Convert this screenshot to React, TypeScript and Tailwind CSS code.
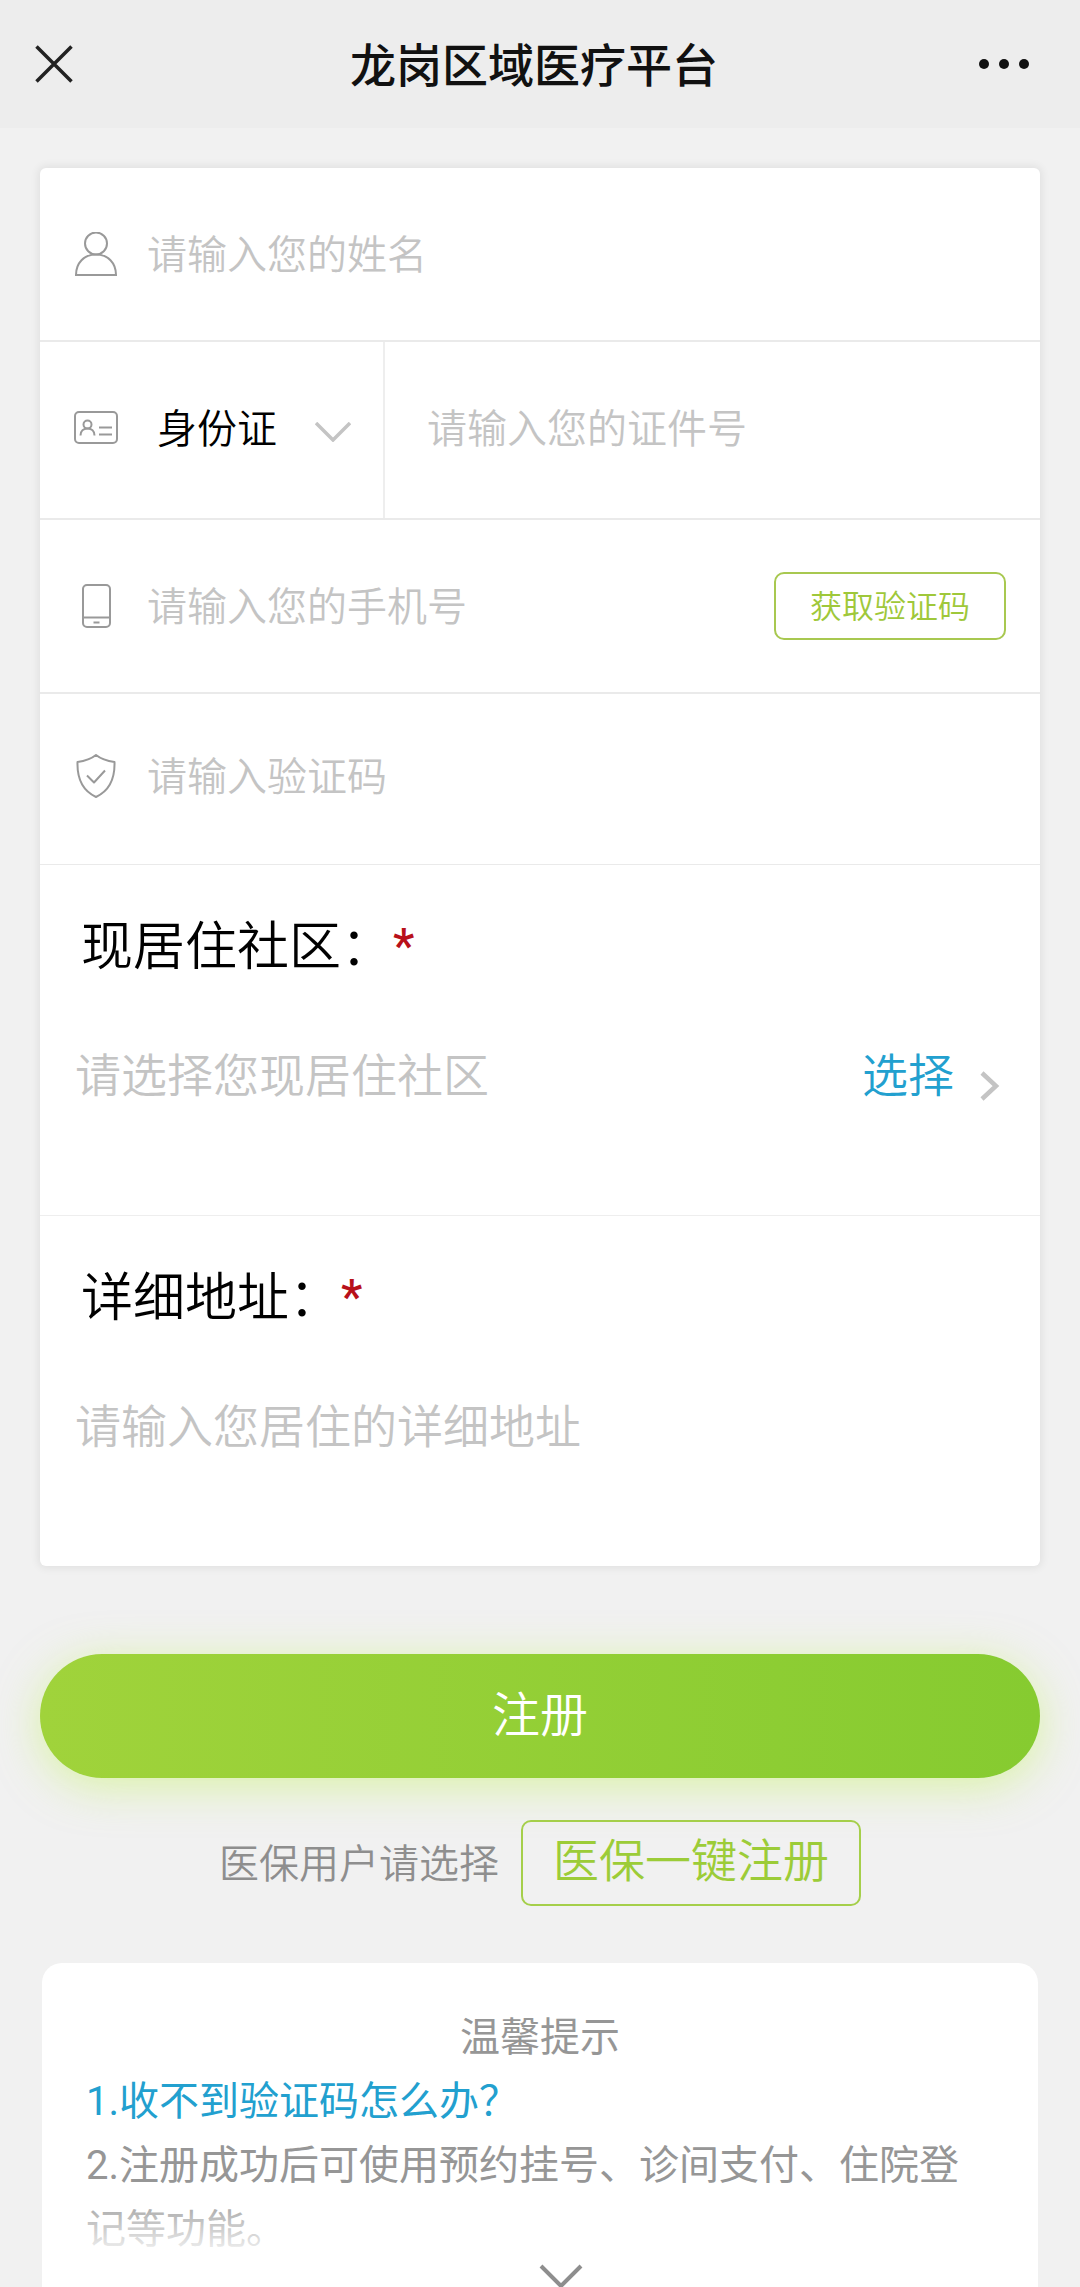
import { useState } from "react"
import type { ReactNode } from "react"

const inputClasses =
  "min-w-0 flex-1 bg-transparent pt-1 text-[40px] leading-[60px] font-[350] text-black outline-none placeholder:text-[#c4c4c4]"

function UserIcon() {
  return (
    <svg className="h-11 w-11" viewBox="0 0 44 44" fill="none" stroke="#999" strokeWidth="2" aria-hidden="true">
      <circle cx="22" cy="11.5" r="11" />
      <path d="M2 43C2 31 10 22.5 22 22.5S42 31 42 43Z" />
    </svg>
  )
}

function IdCardIcon() {
  return (
    <svg className="h-11 w-11" viewBox="0 0 44 44" fill="none" stroke="#999" strokeWidth="2" aria-hidden="true">
      <rect x="1" y="6" width="42" height="31" rx="4" />
      <circle cx="13.5" cy="18.5" r="4" />
      <path d="M6.5 29.5C6.5 25 9.5 22.5 13.5 22.5S20.5 25 20.5 29.5" />
      <path d="M25 21.5H38M25 28.5H38" />
    </svg>
  )
}

function PhoneIcon() {
  return (
    <svg className="h-11 w-11" viewBox="0 0 44 44" fill="none" stroke="#999" strokeWidth="2" aria-hidden="true">
      <rect x="9" y="1" width="27" height="42" rx="4" />
      <path d="M9 33.5H36M19.5 38.5H25.5" />
    </svg>
  )
}

function ShieldIcon() {
  return (
    <svg className="h-11 w-11" viewBox="0 0 44 44" fill="none" stroke="#999" strokeWidth="2" strokeLinejoin="round" aria-hidden="true">
      <path d="M22 1C27 5 33 7 40.5 8C41 24 35 37 22 43C9 37 3 24 3.5 8C11 7 17 5 22 1Z" />
      <path d="M13 21.5L20 28.5L31 16.5" />
    </svg>
  )
}

interface FieldRowProps {
  icon: ReactNode
  label: string
  type?: string
  className: string
  children?: ReactNode
}

function FieldRow({ icon, label, type = "text", className, children }: FieldRowProps) {
  return (
    <div className={`flex items-center border-[#eaeaea] px-[34px] ${className}`}>
      {icon}
      <input type={type} aria-label={label} placeholder={label} className={`ml-[29px] ${inputClasses}`} />
      {children}
    </div>
  )
}

interface AddressSectionProps {
  id: string
  title: string
  placeholder: string
  className?: string
  children?: ReactNode
}

function AddressSection({ id, title, placeholder, className = "", children }: AddressSectionProps) {
  return (
    <div className={`px-[35px] pt-[47px] pb-[109px] ${className}`}>
      <label htmlFor={id} className="flex h-[72px] pl-[6px] text-[52px] leading-[72px] font-[350] text-black">
        <span>{title}：</span>
        <span className="text-[48px] leading-[68px] font-medium text-[#b8101a]">*</span>
      </label>
      <div className="mt-[62px] flex items-center">
        <input
          id={id}
          type="text"
          placeholder={placeholder}
          className="min-w-0 flex-1 bg-transparent text-[46px] leading-[60px] font-[350] text-black outline-none placeholder:text-[#c4c4c4]"
        />
        {children}
      </div>
    </div>
  )
}

export default function App() {
  const [idType, setIdType] = useState("身份证")

  return (
    <div className="min-h-screen bg-[#f1f1f1] font-['Roboto','Noto_Sans_CJK_SC',sans-serif]" lang="zh-CN">
      {/* Title bar */}
      <header className="flex items-center justify-between bg-[#ededed] py-8 pr-[51px] pl-[35px]">
        <button type="button" aria-label="关闭" className="w-[54px]">
          <svg className="h-[38px] w-[38px]" viewBox="0 0 38 38" fill="none" stroke="#222" strokeWidth="3.5">
            <path d="M1.5 1.5L36.5 36.5M36.5 1.5L1.5 36.5" />
          </svg>
        </button>
        <h1 className="pt-1 text-[46px] leading-[60px] font-medium text-[#111]">龙岗区域医疗平台</h1>
        <button type="button" aria-label="更多">
          <svg className="h-[10px] w-[50px]" viewBox="0 0 50 10" fill="#111">
            <circle cx="5" cy="5" r="5" />
            <circle cx="25" cy="5" r="5" />
            <circle cx="45" cy="5" r="5" />
          </svg>
        </button>
      </header>

      <main>
        <form className="px-10 pt-10" onSubmit={(e) => e.preventDefault()}>
          {/* Form card */}
          <div className="rounded-md bg-white shadow-[0_0_8px_2px_rgba(0,0,0,0.07)]">
            <FieldRow icon={<UserIcon />} label="请输入您的姓名" className="border-b-2 py-[54px]" />

            <div className="flex border-b-2 border-[#eaeaea]">
              <div className="flex w-[345px] items-center border-r-2 border-[#eeeeee] pt-[54px] pr-8 pb-[58px] pl-[34px]">
                <IdCardIcon />
                <select
                  aria-label="证件类型"
                  value={idType}
                  onChange={(e) => setIdType(e.target.value)}
                  className="ml-[39px] min-w-0 flex-1 appearance-none bg-transparent pt-1 text-[40px] leading-[60px] font-[350] text-black outline-none"
                >
                  <option>身份证</option>
                  <option>护照</option>
                </select>
                <svg className="mt-2 h-5 w-9" viewBox="0 0 36 20" fill="none" stroke="#c4c4c4" strokeWidth="3.5" aria-hidden="true">
                  <path d="M1 1L18 18L35 1" />
                </svg>
              </div>
              <div className="flex flex-1 items-center pt-[54px] pr-[34px] pb-[58px] pl-[42px]">
                <input type="text" aria-label="证件号" placeholder="请输入您的证件号" className={inputClasses} />
              </div>
            </div>

            <FieldRow icon={<PhoneIcon />} label="请输入您的手机号" type="tel" className="border-b-2 py-[52px]">
              <button
                type="button"
                className="rounded-[10px] border-2 border-[#a8c850] px-[34px] pt-[7px] pb-[5px] text-[32px] leading-[52px] font-[350] text-[#9fc83a]"
              >
                获取验证码
              </button>
            </FieldRow>

            <FieldRow icon={<ShieldIcon />} label="请输入验证码" className="border-b pt-[50px] pb-[56px]" />

            <AddressSection
              id="community"
              title="现居住社区"
              placeholder="请选择您现居住社区"
              className="border-b border-[#eeeeee]"
            >
              <button type="button" className="flex items-center text-[46px] leading-[60px] font-[350] text-[#22a0cf]">
                选择
                <svg className="mt-5 mr-[5px] ml-[26px] h-[30px] w-5" viewBox="0 0 20 30" fill="none" stroke="#c4c4c4" strokeWidth="4.5" aria-hidden="true">
                  <path d="M2 2L16 15L2 28" />
                </svg>
              </button>
            </AddressSection>

            <AddressSection id="address" title="详细地址" placeholder="请输入您居住的详细地址" />
          </div>

          <button
            type="submit"
            className="mt-[88px] block w-full rounded-full bg-linear-to-r from-[#a0d33b] to-[#86cb30] py-[26px] text-[48px] leading-[72px] font-[350] text-white shadow-[0_8px_44px_rgba(195,245,90,0.5)]"
          >
            注册
          </button>

          <div className="mt-[42px] flex items-center justify-center gap-[22px]">
            <span className="pt-1 text-[40px] leading-[60px] font-[350] text-[#8e8e8e]">医保用户请选择</span>
            <button
              type="button"
              className="rounded-[10px] border-2 border-[#a5cf4a] px-[30px] pt-[9px] pb-[13px] text-[46px] leading-[60px] font-[350] text-[#9ccc38]"
            >
              医保一键注册
            </button>
          </div>
        </form>

        {/* Tips */}
        <section className="mx-[42px] mt-[57px] rounded-t-[20px] bg-white pt-[43px] text-[40px] leading-[64px] text-[#969696]">
          <div className="relative px-11">
            <h2 className="text-center">温馨提示</h2>
            <a href="#code-help" className="block text-[#22a0cf]">
              1.收不到验证码怎么办？
            </a>
            <p>2.注册成功后可使用预约挂号、诊间支付、住院登记等功能。</p>
            <div className="pointer-events-none absolute inset-x-0 bottom-0 h-16 bg-linear-to-b from-white/10 to-white" />
          </div>
          <button type="button" aria-label="展开" className="flex w-full justify-center pl-[42px]">
            <svg className="h-[25px] w-11" viewBox="0 0 44 25" fill="none" stroke="#8e8e8e" strokeWidth="4">
              <path d="M2 4L22 24L42 4" />
            </svg>
          </button>
        </section>
      </main>
    </div>
  )
}
